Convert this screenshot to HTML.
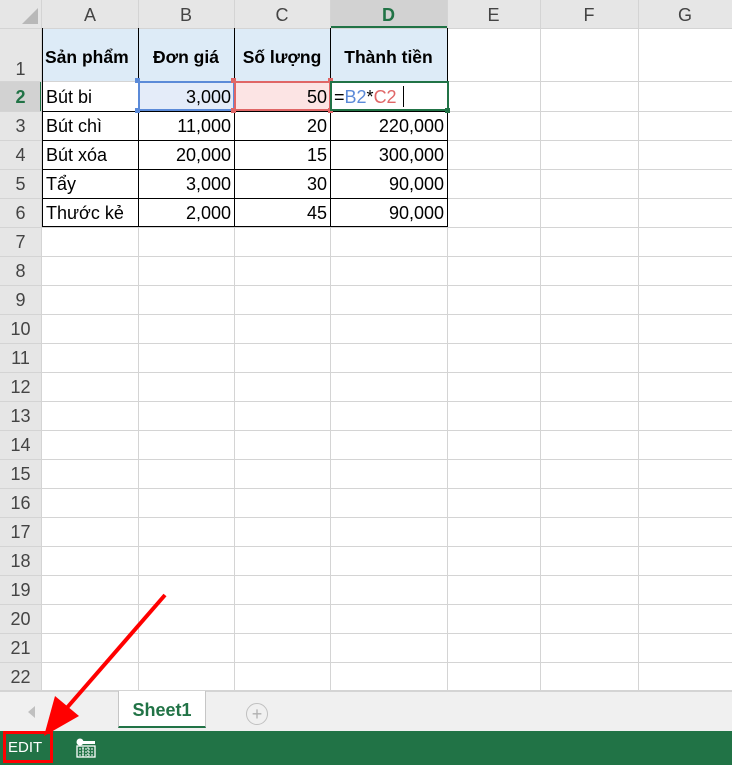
<!DOCTYPE html>
<html><head><meta charset="utf-8"><style>
*{margin:0;padding:0;box-sizing:border-box}
body{width:732px;height:765px;overflow:hidden;background:#fff;font-family:"Liberation Sans",sans-serif;position:relative}
.a{position:absolute}
.vl{position:absolute;top:0;width:1px;height:691px;background:#d4d4d4}
.hl{position:absolute;left:0;width:732px;height:1px;background:#d4d4d4}
.ch{position:absolute;top:0;height:28px;line-height:30px;text-align:center;font-size:18px;color:#444}
.rn{position:absolute;left:0;width:41px;text-align:center;font-size:18px;color:#444;height:29px;line-height:31px}
.c{position:absolute;height:29px;line-height:30px;font-size:18px;color:#000;white-space:nowrap}
.l{padding-left:4px}
.r{text-align:right;padding-right:3px}
.h{font-weight:bold;font-size:17.5px}
</style></head><body>
<div class="a" style="left:0;top:0;width:732px;height:28px;background:#e6e6e6"></div>
<div class="a" style="left:0;top:0;width:42px;height:691px;background:#e6e6e6"></div>
<div class="a" style="left:330px;top:0;width:117px;height:28px;background:#d2d2d2;border-bottom:2px solid #217346"></div>
<div class="a" style="left:0;top:82px;width:42px;height:29px;background:#d2d2d2;border-right:2px solid #217346"></div>
<svg class="a" style="left:22px;top:8px" width="16" height="16"><polygon points="16,0 16,16 0,16" fill="#b8b8b8"/></svg>
<div class="a" style="left:42px;top:28px;width:405px;height:54px;background:#ddebf7"></div>
<div class="a" style="left:138px;top:82px;width:96px;height:29px;background:#e4ecf9"></div>
<div class="a" style="left:234px;top:82px;width:96px;height:29px;background:#fce4e4"></div>
<div class="vl" style="left:41px"></div><div class="vl" style="left:138px"></div><div class="vl" style="left:234px"></div><div class="vl" style="left:330px"></div><div class="vl" style="left:447px"></div><div class="vl" style="left:540px"></div><div class="vl" style="left:638px"></div>
<div class="hl" style="top:28px"></div><div class="hl" style="top:81px"></div>
<div class="hl" style="top:111px"></div><div class="hl" style="top:140px"></div><div class="hl" style="top:169px"></div><div class="hl" style="top:198px"></div><div class="hl" style="top:227px"></div><div class="hl" style="top:256px"></div><div class="hl" style="top:285px"></div><div class="hl" style="top:314px"></div><div class="hl" style="top:343px"></div><div class="hl" style="top:372px"></div><div class="hl" style="top:401px"></div><div class="hl" style="top:430px"></div><div class="hl" style="top:459px"></div><div class="hl" style="top:488px"></div><div class="hl" style="top:517px"></div><div class="hl" style="top:546px"></div><div class="hl" style="top:575px"></div><div class="hl" style="top:604px"></div><div class="hl" style="top:633px"></div><div class="hl" style="top:662px"></div><div class="hl" style="top:690px"></div>
<div class="ch" style="left:42px;width:96px">A</div><div class="ch" style="left:138px;width:96px">B</div><div class="ch" style="left:234px;width:96px">C</div><div class="ch" style="left:330px;width:117px;color:#217346;font-weight:bold">D</div><div class="ch" style="left:447px;width:93px">E</div><div class="ch" style="left:540px;width:98px">F</div><div class="ch" style="left:638px;width:94px">G</div>
<div class="rn" style="top:54px">1</div>
<div class="rn" style="top:82px;color:#217346;font-weight:bold">2</div>
<div class="rn" style="top:111px">3</div><div class="rn" style="top:140px">4</div><div class="rn" style="top:169px">5</div><div class="rn" style="top:198px">6</div><div class="rn" style="top:227px">7</div><div class="rn" style="top:256px">8</div><div class="rn" style="top:285px">9</div><div class="rn" style="top:314px">10</div><div class="rn" style="top:343px">11</div><div class="rn" style="top:372px">12</div><div class="rn" style="top:401px">13</div><div class="rn" style="top:430px">14</div><div class="rn" style="top:459px">15</div><div class="rn" style="top:488px">16</div><div class="rn" style="top:517px">17</div><div class="rn" style="top:546px">18</div><div class="rn" style="top:575px">19</div><div class="rn" style="top:604px">20</div><div class="rn" style="top:633px">21</div><div class="rn" style="top:662px">22</div>
<div class="a" style="left:42px;top:28px;width:406px;height:199px;border:1px solid #000;border-top:none"></div>
<div class="a" style="left:42px;top:140px;width:406px;height:1px;background:#000"></div>
<div class="a" style="left:42px;top:169px;width:406px;height:1px;background:#000"></div>
<div class="a" style="left:42px;top:198px;width:406px;height:1px;background:#000"></div>
<div class="a" style="left:42px;top:111px;width:406px;height:1px;background:#000"></div>
<div class="a" style="left:138px;top:28px;width:1px;height:199px;background:#000"></div>
<div class="a" style="left:234px;top:28px;width:1px;height:199px;background:#000"></div>
<div class="a" style="left:330px;top:28px;width:1px;height:199px;background:#000"></div>
<div class="c l h" style="left:42px;top:42px;padding-left:3px">Sản phẩm</div>
<div class="c h" style="left:138px;top:42px;width:96px;text-align:center">Đơn giá</div>
<div class="c h" style="left:234px;top:42px;width:96px;text-align:center">Số lượng</div>
<div class="c h" style="left:330px;top:42px;width:117px;text-align:center">Thành tiền</div>
<div class="c l" style="left:42px;top:82px">Bút bi</div><div class="c r" style="left:138px;top:82px;width:96px">3,000</div><div class="c r" style="left:234px;top:82px;width:96px">50</div>
<div class="c l" style="left:42px;top:111px">Bút chì</div><div class="c r" style="left:138px;top:111px;width:96px">11,000</div><div class="c r" style="left:234px;top:111px;width:96px">20</div><div class="c r" style="left:330px;top:111px;width:117px">220,000</div>
<div class="c l" style="left:42px;top:140px">Bút xóa</div><div class="c r" style="left:138px;top:140px;width:96px">20,000</div><div class="c r" style="left:234px;top:140px;width:96px">15</div><div class="c r" style="left:330px;top:140px;width:117px">300,000</div>
<div class="c l" style="left:42px;top:169px">Tẩy</div><div class="c r" style="left:138px;top:169px;width:96px">3,000</div><div class="c r" style="left:234px;top:169px;width:96px">30</div><div class="c r" style="left:330px;top:169px;width:117px">90,000</div>
<div class="c l" style="left:42px;top:198px">Thước kẻ</div><div class="c r" style="left:138px;top:198px;width:96px">2,000</div><div class="c r" style="left:234px;top:198px;width:96px">45</div><div class="c r" style="left:330px;top:198px;width:117px">90,000</div>
<div class="a" style="left:138px;top:81px;width:97px;height:30px;border:2px solid #5b8ad8"></div>
<div class="a" style="left:135px;top:78px;width:5px;height:5px;background:#5b8ad8"></div><div class="a" style="left:135px;top:108px;width:5px;height:5px;background:#5b8ad8"></div>
<div class="a" style="left:234px;top:81px;width:97px;height:30px;border:2px solid #e06666"></div>
<div class="a" style="left:231px;top:78px;width:5px;height:5px;background:#e06666"></div><div class="a" style="left:231px;top:108px;width:5px;height:5px;background:#e06666"></div><div class="a" style="left:328px;top:78px;width:5px;height:5px;background:#e06666"></div><div class="a" style="left:328px;top:108px;width:5px;height:5px;background:#e06666"></div>
<div class="a" style="left:330px;top:81px;width:119px;height:30px;border:2px solid #217346;background:#fff"></div>
<div class="a" style="left:445px;top:108px;width:5px;height:5px;background:#217346"></div>
<div class="c" style="left:334px;top:82px">=<span style="color:#5b8ad8">B2</span>*<span style="color:#e06666">C2</span></div>
<div class="a" style="left:403px;top:86px;width:1px;height:21px;background:#000"></div>
<div class="a" style="left:0;top:691px;width:732px;height:40px;background:#f0f0f0;border-top:1px solid #d4d4d4"></div>
<svg class="a" style="left:28px;top:706px" width="8" height="12"><polygon points="7,0 7,12 0,6" fill="#c0c0c0"/></svg>
<div class="a" style="left:118px;top:691px;width:88px;height:37px;background:#fff;border:1px solid #c6c6c6;border-top:none;border-bottom:2px solid #217346;text-align:center;line-height:38px;font-weight:bold;font-size:18px;color:#217346">Sheet1</div>
<div class="a" style="left:246px;top:703px;width:22px;height:22px;border:1px solid #c0c0c0;border-radius:50%;text-align:center;line-height:20px;color:#b0b0b0;font-size:18px">+</div>
<div class="a" style="left:0;top:731px;width:732px;height:34px;background:#217346"></div>
<div class="a" style="left:8px;top:731px;height:34px;line-height:33px;color:#fff;font-size:15px">EDIT</div>
<div class="a" style="left:3px;top:731px;width:50px;height:32px;border:3px solid #ff0000"></div>
<svg class="a" style="left:76px;top:738px" width="20" height="20"><circle cx="4" cy="4" r="3.5" fill="#fff"/><rect x="6" y="3" width="13" height="3" fill="#fff"/><rect x="1" y="8" width="18" height="11" fill="none" stroke="#fff" stroke-width="1.3"/><path d="M3 11h14M3 14h14M3 17h14M7 9v10M12 9v10" stroke="#fff" stroke-width="1" stroke-dasharray="2 1"/></svg>
<svg class="a" style="left:0;top:0" width="732" height="765"><line x1="165" y1="595" x2="65" y2="710" stroke="#f00" stroke-width="4"/><polygon points="44,736 55,696 79,716" fill="#f00"/></svg>
</body></html>
